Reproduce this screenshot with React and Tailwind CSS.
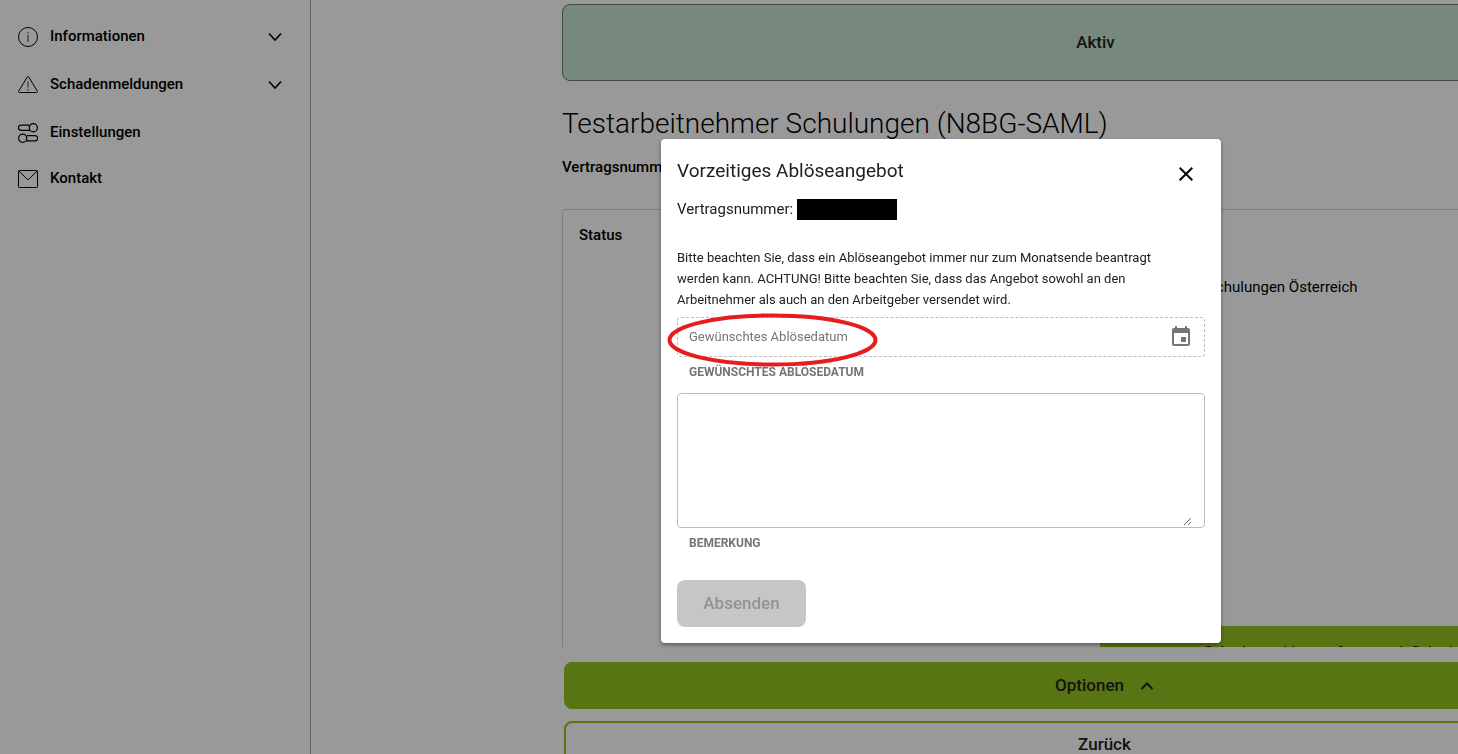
import React, { useState } from 'react';

const navItems = [
  { label: 'Informationen', icon: InfoIcon, expandable: true },
  { label: 'Schadenmeldungen', icon: WarningIcon, expandable: true },
  { label: 'Einstellungen', icon: SettingsIcon },
  { label: 'Kontakt', icon: MailIcon },
];

function InfoIcon() {
  return (
    <svg className="mt-0.5" width="20" height="20" viewBox="0 0 20 20" fill="none" stroke="currentColor" aria-hidden="true">
      <circle cx="10" cy="10" r="9.5" />
      <path d="M10 8v7M10 5v1.5" opacity="0.8" />
    </svg>
  );
}

function WarningIcon() {
  return (
    <svg className="mt-0.5" width="20" height="20" viewBox="0 0 20 20" fill="none" stroke="currentColor" strokeLinejoin="round" aria-hidden="true">
      <path d="M9.3 1.9a.8.8 0 0 1 1.4 0l8.7 14.4a.8.8 0 0 1-.7 1.2H1.3a.8.8 0 0 1-.7-1.2z" />
      <path d="M10 6.5v6M10 14v1.5" opacity="0.8" />
    </svg>
  );
}

function SettingsIcon() {
  return (
    <svg className="mt-0.5" width="20" height="20" viewBox="0 0 20 20" fill="none" stroke="currentColor" strokeWidth="1.2" aria-hidden="true">
      <circle cx="15.3" cy="4.8" r="4.1" />
      <path d="M11.4 2.2H3a2.6 2.6 0 0 0 0 5.2h9" />
      <circle cx="4.7" cy="15.3" r="4.1" />
      <path d="M8.6 12.7H17a2.6 2.6 0 0 1 0 5.2H8" />
    </svg>
  );
}

function MailIcon() {
  return (
    <svg className="mt-0.5" width="20" height="20" viewBox="0 0 20 20" fill="none" stroke="currentColor" aria-hidden="true">
      <rect x=".5" y="1.5" width="19" height="17" rx=".8" />
      <path d="M1 2l8.1 8.2a1.3 1.3 0 0 0 1.8 0L19 2" />
    </svg>
  );
}

function Chevron({ up }) {
  return (
    <svg className="mt-0.5" width="14" height="14" viewBox="0 0 14 14" fill="none" stroke="currentColor" strokeWidth={up ? 2 : 1.6} aria-hidden="true">
      <path d={up ? 'M1.5 9L7 3.5 12.5 9' : 'M1 3.5l6 6.5 6-6.5'} />
    </svg>
  );
}

function Sidebar() {
  return (
    <nav className="w-[311px] shrink-0 border-r border-[#a8a8a8] pt-3">
      {navItems.map(({ label, icon: Icon, expandable }) => (
        <a key={label} href="#" className="flex h-12 items-center gap-3 pr-7 pl-[18px] text-[15px] font-medium text-black last:h-11">
          <Icon />
          <span className="flex-1">{label}</span>
          {expandable && <Chevron />}
        </a>
      ))}
    </nav>
  );
}

function Contract() {
  return (
    <main className="flex-1 overflow-hidden pt-1 pl-[251px]">
      <div className="flex h-full min-w-[1083px] flex-col">
        <div className="mr-4 flex h-[77px] shrink-0 items-center justify-center rounded-lg border border-[#6f7f75] bg-[#c7e4cf] text-[17px] font-medium text-[#222]">
          Aktiv
        </div>
        <h1 className="mt-6 text-[28px] leading-[38px] font-light text-black">Testarbeitnehmer Schulungen (N8BG-SAML)</h1>
        <p className="mt-3 text-[15px] leading-6 font-medium text-black">Vertragsnummer:</p>
        <section className="mt-[30px] h-[438px] shrink-0 overflow-hidden rounded-t border-x border-t border-[#d2d2d2] px-4 pt-[13px] text-[15px] leading-6 text-black">
          <h2 className="font-medium">Status</h2>
          <p className="mt-7 pl-[628px]">Schulungen Österreich</p>
          <div className="mt-[327px] -mr-4 ml-[521px] h-12 bg-[#93c320] pt-3.5 pl-[104px]">
            Schadenmeldung erfassen mit Schadendatum
          </div>
        </section>
        <div className="mt-[15px] flex shrink-0 flex-col gap-3 pl-0.5 text-[17px] font-medium text-[#222]">
          <button className="flex h-[47px] items-center justify-center gap-4 rounded-lg bg-[#93c320]">
            Optionen <Chevron up />
          </button>
          <button className="h-[47px] rounded-lg border-2 border-[#93c320]">Zurück</button>
        </div>
      </div>
    </main>
  );
}

function SettlementDialog({ onClose }) {
  const [date, setDate] = useState('');
  const [note, setNote] = useState('');

  return (
    <div className="fixed inset-0 flex items-start justify-center bg-black/40 pt-[139px] pl-[424px]">
      <form
        role="dialog"
        aria-labelledby="dialog-title"
        className="relative w-[560px] rounded bg-white p-4 text-[#212121] shadow-[0_2px_4px_rgba(0,0,0,0.4)]"
      >
        <div className="flex items-center justify-between pr-2">
          <h2 id="dialog-title" className="text-[19px] leading-8">Vorzeitiges Ablöseangebot</h2>
          <button type="button" aria-label="Schließen" onClick={onClose} className="mt-1.5 p-1 text-black">
            <svg width="14" height="14" viewBox="0 0 14 14" stroke="currentColor" strokeWidth="2">
              <path d="M.7.7l12.6 12.6M13.3.7L.7 13.3" />
            </svg>
          </button>
        </div>
        <p className="mt-2.5 flex items-center text-[15px] leading-6">
          Vertragsnummer:
          <span className="ml-1 h-[21px] w-[100px] bg-black" />
        </p>
        <p className="mt-[26px] pr-4 text-[13px] leading-[21px]">
          Bitte beachten Sie, dass ein Ablöseangebot immer nur zum Monatsende beantragt werden kann. ACHTUNG! Bitte
          beachten Sie, dass das Angebot sowohl an den Arbeitnehmer als auch an den Arbeitgeber versendet wird.
        </p>
        <div className="mt-[7px] flex h-10 items-center rounded border border-dashed border-[#bdbdbd] pr-[11px] pl-[11px]">
          <input
            id="date"
            value={date}
            onChange={(e) => setDate(e.target.value)}
            placeholder="Gewünschtes Ablösedatum"
            className="min-w-0 flex-1 text-[13px] outline-none placeholder:text-[#757575]"
          />
          <button type="button" aria-label="Kalender öffnen" className="text-[#757575]">
            <svg width="24" height="24" viewBox="0 0 24 24" fill="currentColor">
              <path d="M17 12h-5v5h5v-5zM16 1v2H8V1H6v2H5c-1.11 0-1.99.9-1.99 2L3 19c0 1.1.89 2 2 2h14c1.1 0 2-.9 2-2V5c0-1.1-.9-2-2-2h-1V1h-2zm3 18H5V8h14v11z" />
            </svg>
          </button>
        </div>
        <label htmlFor="date" className="mt-1.5 block pl-3 text-xs leading-[18px] font-bold text-[#757575] uppercase">
          Gewünschtes Ablösedatum
        </label>
        <div className="mt-3 h-[135px] rounded border border-[#bdbdbd] py-px pr-3 pl-3">
          <textarea id="note" value={note} onChange={(e) => setNote(e.target.value)} className="block h-full w-full resize-y text-sm outline-none" />
        </div>
        <label htmlFor="note" className="mt-1.5 block pl-3 text-xs leading-[18px] font-bold text-[#757575] uppercase">
          Bemerkung
        </label>
        <button disabled className="mt-7 h-[47px] w-[129px] rounded-lg bg-[#c6c6c6] text-[17px] font-medium text-[#939393]">
          Absenden
        </button>
        {/* Markierung um das Datumsfeld */}
        <svg className="pointer-events-none absolute top-[174px] left-1.5" width="211" height="54" viewBox="0 0 211 54" fill="none" stroke="#e81c1c" strokeWidth="4">
          <ellipse cx="105.5" cy="27" rx="103" ry="24.5" />
        </svg>
      </form>
    </div>
  );
}

function App() {
  const [open, setOpen] = useState(true);

  return (
    <div className="flex h-screen overflow-hidden bg-white font-['Roboto',sans-serif]">
      <Sidebar />
      <Contract />
      {open && <SettlementDialog onClose={() => setOpen(false)} />}
    </div>
  );
}

export default App;
